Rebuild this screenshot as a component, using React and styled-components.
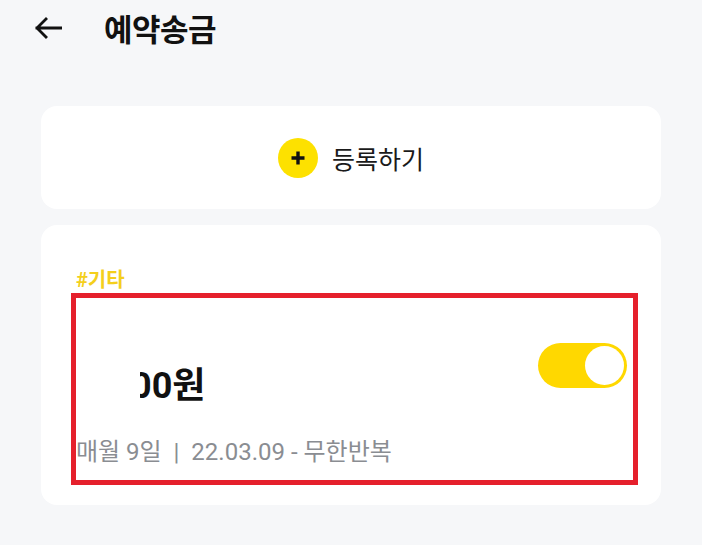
import React from "react";
import styled, { createGlobalStyle } from "styled-components";

const Global = createGlobalStyle`
  html, body {
    margin: 0;
    padding: 0;
    background: #f6f7f9;
    font-family: Roboto, "Noto Sans CJK KR", "Noto Sans", sans-serif;
  }
  * { box-sizing: border-box; }
`;

const Page = styled.div`
  width: 702px;
  min-height: 545px;
  background: #f6f7f9;
`;

const Header = styled.header`
  height: 55px;
  display: flex;
  align-items: center;
  padding-left: 34px;
`;

const BackButton = styled.button`
  border: 0;
  background: none;
  padding: 0;
  width: 28px;
  height: 22px;
  display: flex;
  align-items: center;
  justify-content: center;
  cursor: pointer;
`;

const Title = styled.h1`
  margin: 0 0 0 42px;
  font-size: 31px;
  line-height: 36px;
  font-weight: 700;
  color: #111;
  font-family: "Noto Sans CJK KR", Roboto, sans-serif;
  letter-spacing: -0.5px;
`;

const Content = styled.main`
  padding: 51px 41px 0;
  display: flex;
  flex-direction: column;
  gap: 16px;
`;

const Card = styled.section`
  background: #fff;
  border-radius: 16px;
  position: relative;
  height: ${(p) => p.$h}px;
`;

const AddCard = styled(Card)`
  display: flex;
  align-items: center;
  justify-content: center;
  gap: 14px;
`;

const PlusCircle = styled.span`
  width: 40px;
  height: 40px;
  border-radius: 50%;
  background: #fde100;
  display: flex;
  align-items: center;
  justify-content: center;
`;

const AddLabel = styled.span`
  font-size: 25px;
  line-height: 30px;
  color: #1a1a1a;
  font-family: "Noto Sans CJK KR", sans-serif;
`;

const ItemCard = styled(Card)`
  padding: 43px 35px 0;
`;

const Tag = styled.div`
  font-size: 20px;
  line-height: 24px;
  font-weight: 700;
  color: #f4cf1c;
  font-family: Roboto, "Noto Sans CJK KR", sans-serif;
`;

const Body = styled.div`
  display: flex;
  justify-content: space-between;
  align-items: flex-start;
`;

const Info = styled.div`
  display: flex;
  flex-direction: column;
`;

const AmountClip = styled.div`
  margin-top: 72px;
  margin-left: 64px;
  overflow: hidden;
  height: 44px;
`;

const Amount = styled.div`
  margin-left: -9px;
  font-size: 36px;
  line-height: 44px;
  font-weight: 700;
  color: #111;
  white-space: nowrap;
`;

const Sub = styled.div`
  margin-top: 29px;
  font-size: 24px;
  line-height: 30px;
  color: #8a8d92;
  white-space: nowrap;
`;

const Toggle = styled.div`
  margin-top: 51px;
  margin-right: -1px;
  width: 89px;
  height: 45px;
  border-radius: 23px;
  background: #ffd800;
  padding: 3px;
  display: flex;
  justify-content: ${(p) => (p.$on ? "flex-end" : "flex-start")};
`;

const Knob = styled.span`
  width: 39px;
  height: 39px;
  border-radius: 50%;
  background: #fff;
`;

const Highlight = styled.div`
  position: absolute;
  left: 30px;
  top: 68px;
  width: 567px;
  height: 192px;
  border: 5px solid #e5202c;
  pointer-events: none;
`;

export default function App() {
  return (
    <Page>
      <Global />
      <Header>
        <BackButton aria-label="뒤로">
          <svg width="28" height="22" viewBox="0 0 28 22" fill="none">
            <path
              d="M27 11H3M12 2L3 11l9 9"
              stroke="#111"
              strokeWidth="2.8"
              strokeLinecap="square"
            />
          </svg>
        </BackButton>
        <Title>예약송금</Title>
      </Header>
      <Content>
        <AddCard $h={103}>
          <PlusCircle>
            <svg width="16" height="16" viewBox="0 0 16 16">
              <path d="M8 1.5v13M1.5 8h13" stroke="#111" strokeWidth="3.4" />
            </svg>
          </PlusCircle>
          <AddLabel>등록하기</AddLabel>
        </AddCard>
        <ItemCard $h={280}>
          <Tag>#기타</Tag>
          <Body>
            <Info>
              <AmountClip>
                <Amount>00원</Amount>
              </AmountClip>
              <Sub>매월 9일 &nbsp;|&nbsp; 22.03.09 - 무한반복</Sub>
            </Info>
            <Toggle $on>
              <Knob />
            </Toggle>
          </Body>
          <Highlight />
        </ItemCard>
      </Content>
    </Page>
  );
}
